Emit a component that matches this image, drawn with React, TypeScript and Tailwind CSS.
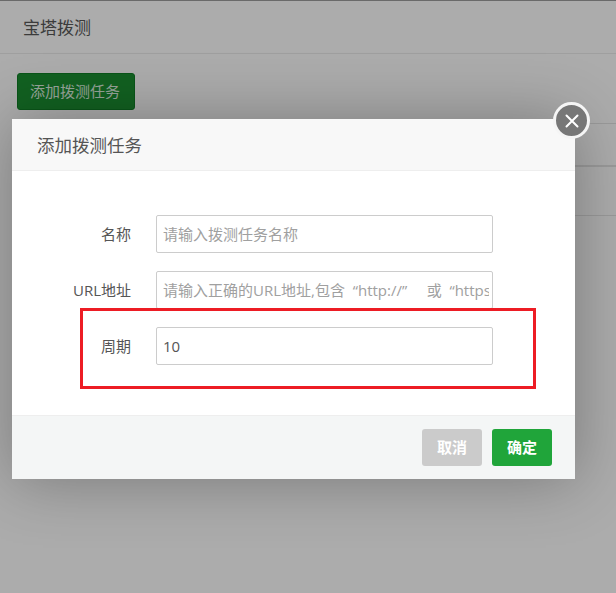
const font = "font-['Open_Sans','Noto_Sans_CJK_SC',sans-serif]";

function FormRow({ label, value, placeholder }: { label: string; value?: string; placeholder?: string }) {
  return (
    <div className="flex items-center h-[38px] mb-[18px]">
      <label className="w-[119px] text-right text-[15px] text-[#555]">{label}</label>
      <input
        readOnly
        value={value}
        placeholder={placeholder}
        className="ml-[25px] w-[337px] h-[38px] pl-[6px] pr-[3px] text-[15px] text-[#555] placeholder:text-[#a0a0a0] bg-white border border-[#ccc] rounded-[2px] outline-none"
      />
    </div>
  );
}

export default function App() {
  return (
    <div className={`relative w-[616px] h-[593px] overflow-hidden bg-[#f6f6f6] ${font}`}>
      <div className="h-[54px] border-t border-b border-t-[#999] border-b-[#e4e4e4] pl-6 pt-[2px] flex items-center text-[17px] text-[#555]">
        <span className="-ml-px">宝塔拨测</span>
      </div>
      <div className="pl-[17px] pt-[19px]">
        <button className="w-[118px] h-[37px] rounded-[3px] border border-[#0f7a25] bg-[#1a8c30] text-[15px] text-[#d8eadc] pr-[2px]">
          添加拨测任务
        </button>
        <div className="mt-[13px] h-[92px] border-t border-[#ddd]">
          <div className="h-[43px] border-b-2 border-[#ddd]"></div>
          <div className="h-[49px] border-b border-[#ddd]"></div>
        </div>
      </div>

      {/* shade over the page */}
      <div className="absolute inset-0 bg-black/30"></div>

      {/* dialog */}
      <div className="absolute left-3 top-[119px] w-[563px] h-[360px] bg-white flex flex-col shadow-[1px_1px_60px_rgba(0,0,0,0.3)]">
        <div className="h-[52px] shrink-0 bg-[#f8f8f8] border-b border-[#eee] pl-[25px] pt-[1px] flex items-center text-[17.5px] text-[#555]">
          添加拨测任务
        </div>
        <div className="flex-1 pt-11 overflow-hidden">
          <FormRow label="名称" placeholder="请输入拨测任务名称" />
          <FormRow label="URL地址" placeholder="请输入正确的URL地址,包含  “http://”     或  “https://”" />
          <FormRow label="周期" value="10" />
        </div>
        <div className="h-[64px] shrink-0 bg-[#f4f6f6] border-t border-[#eee] flex items-center justify-end gap-[10px] pr-[23px]">
          <button className="w-[60px] h-[37px] rounded-[3px] bg-[#cbcbcb] text-[15px] font-bold text-white">取消</button>
          <button className="w-[60px] h-[37px] rounded-[3px] bg-[#20a53a] text-[15px] font-bold text-white">确定</button>
        </div>
      </div>

      {/* close button */}
      <div className="absolute left-[553px] top-[102px] w-[37px] h-[37px] rounded-full bg-[#777] border-[3px] border-[#f5f5f5] flex items-center justify-center">
        <svg width="16" height="16" viewBox="0 0 16 16" fill="none" stroke="white" strokeWidth="2" strokeLinecap="round">
          <path d="M2.5 2.5l11 11M13.5 2.5l-11 11" />
        </svg>
      </div>

      {/* red annotation box */}
      <div className="absolute left-[80px] top-[308px] w-[456px] h-[81px] border-[3px] border-[#ed1c24] pointer-events-none"></div>
    </div>
  );
}
